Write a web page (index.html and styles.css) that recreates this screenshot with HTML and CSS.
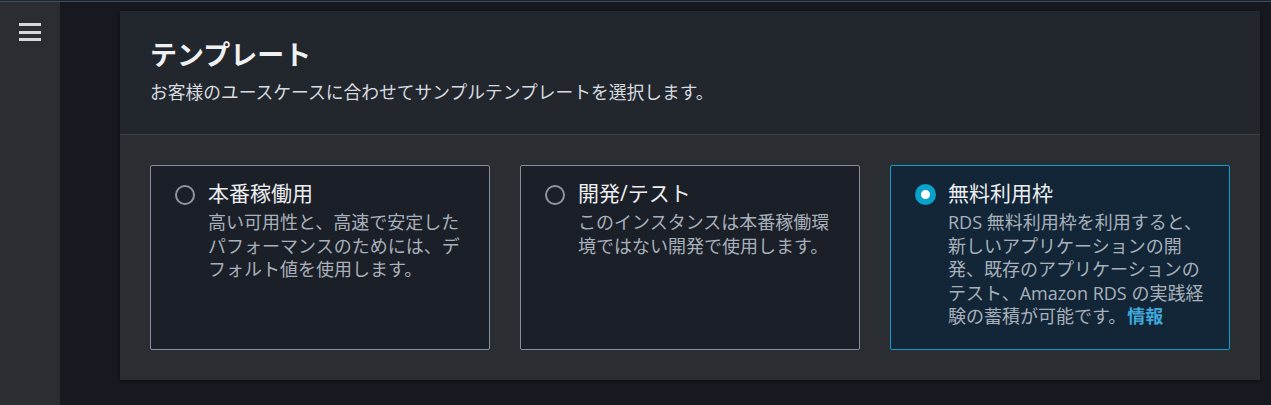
FILE: index.html
```html
<!DOCTYPE html>
<html lang="ja">
<head>
<meta charset="utf-8">
<title>テンプレート</title>
<link rel="stylesheet" href="styles.css">
</head>
<body>
<div class="topline"></div>
<div class="layout">
  <nav class="sidebar">
    <button class="menu" aria-label="メニュー">
      <span class="bar"></span><span class="bar"></span><span class="bar"></span>
    </button>
  </nav>
  <main class="main">
    <section class="panel">
      <header class="panel-header">
        <h2 class="title">テンプレート</h2>
        <p class="subtitle">お客様のユースケースに合わせてサンプルテンプレートを選択します。</p>
      </header>
      <div class="panel-body">
        <div class="tiles">
          <label class="tile">
            <span class="radio"></span>
            <span class="tile-text">
              <span class="tile-label">本番稼働用</span>
              <span class="tile-desc">高い可用性と、高速で安定したパフォーマンスのためには、デフォルト値を使用します。</span>
            </span>
          </label>
          <label class="tile">
            <span class="radio"></span>
            <span class="tile-text">
              <span class="tile-label">開発/テスト</span>
              <span class="tile-desc">このインスタンスは本番稼働環境ではない開発で使用します。</span>
            </span>
          </label>
          <label class="tile selected">
            <span class="radio checked"></span>
            <span class="tile-text">
              <span class="tile-label">無料利用枠</span>
              <span class="tile-desc">RDS 無料利用枠を利用すると、新しいアプリケーションの開発、既存のアプリケーションのテスト、Amazon RDS の実践経験の蓄積が可能です。<a class="info" href="#">情報</a></span>
            </span>
          </label>
        </div>
      </div>
    </section>
  </main>
</div>
</body>
</html>
```

FILE: styles.css
```css
html, body {
  margin: 0;
  padding: 0;
}
body {
  width: 1271px;
  height: 405px;
  overflow: hidden;
  background: #16191f;
  font-family: "Open Sans", "Noto Sans CJK JP", sans-serif;
  color: #d1d5db;
}
.topline {
  height: 1px;
  border-bottom: 1px solid #414d5c;
  background: #1d2330;
}
.layout {
  display: flex;
  height: 403px;
}
.sidebar {
  width: 60px;
  flex: none;
  background: #2a2e33;
  padding-top: 21px;
  box-sizing: border-box;
}
.menu {
  display: flex;
  flex-direction: column;
  gap: 4.5px;
  margin-left: 19px;
  padding: 0;
  border: 0;
  background: none;
  width: 22px;
}
.bar {
  display: block;
  width: 22px;
  height: 3px;
  background: #d5d8dc;
}
.main {
  flex: 1;
  padding: 9px 11px 0 60px;
}
.panel {
  background: #2a2d32;
  box-shadow: 0 1px 3px rgba(0, 0, 0, 0.6);
}
.panel-header {
  background: #22262d;
  padding: 27px 30px 30px;
  border-bottom: 1px solid #3f444c;
}
.title {
  margin: 0;
  font-size: 27px;
  line-height: 34px;
  font-weight: 700;
  color: #eef0f2;
}
.subtitle {
  margin: 8px 0 0;
  font-size: 17.75px;
  line-height: 24px;
  color: #d8dce0;
}
.panel-body {
  padding: 30px 30px 30px;
}
.tiles {
  display: grid;
  grid-template-columns: repeat(3, 340px);
  gap: 30px;
}
.tile {
  display: flex;
  gap: 13px;
  box-sizing: border-box;
  min-height: 185px;
  padding: 13px 20px 20px 24px;
  background: #1b1f28;
  border: 1px solid #858f9b;
  border-radius: 2px;
}
.tile.selected {
  background: #132638;
  border-color: #0a9fcb;
}
.radio {
  flex: none;
  box-sizing: border-box;
  width: 20px;
  height: 20px;
  margin-top: 6px;
  border: 2px solid #8d969f;
  border-radius: 50%;
}
.radio.checked {
  width: 21px;
  height: 21px;
  margin-top: 5px;
  border: 6.5px solid #0aa2cc;
  background: #ffffff;
}
.tile.selected .tile-text {
  margin-left: -1px;
}
.tile-text {
  display: flex;
  flex-direction: column;
  gap: 4px;
}
.tile-label {
  font-size: 21px;
  line-height: 28px;
  color: #eceef0;
}
.tile-desc {
  font-size: 18px;
  line-height: 23.5px;
  color: #a8b1bb;
}
.info {
  display: inline-block;
  margin-left: 1px;
  color: #3ea8da;
  font-weight: 700;
  text-decoration: none;
}
```
